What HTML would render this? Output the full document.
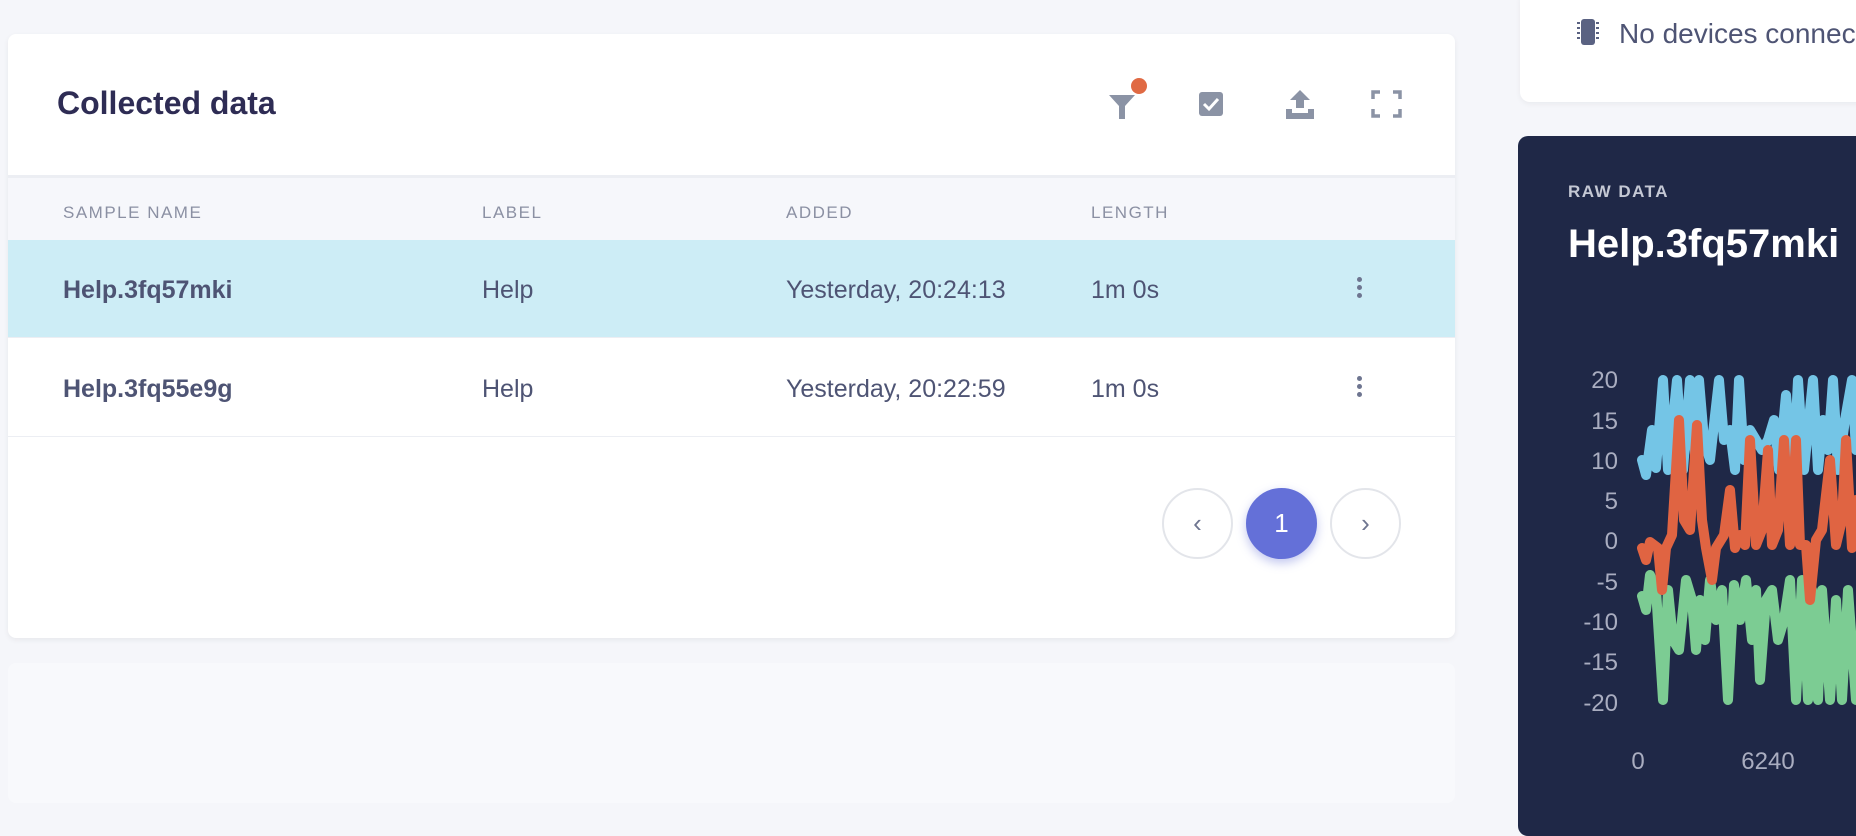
<!DOCTYPE html>
<html><head><meta charset="utf-8"><style>
*{margin:0;padding:0;box-sizing:border-box}
body{width:1856px;height:793px;overflow:hidden;background:#f5f6fa;font-family:"Liberation Sans",sans-serif;position:relative}
.card{position:absolute;left:8px;top:34px;width:1447px;height:604px;background:#fff;border-radius:8px;box-shadow:0 2px 6px rgba(0,0,0,.06);overflow:hidden}
.title{position:absolute;left:49px;top:51px;font-size:32px;font-weight:bold;color:#2e2c54}
.th{position:absolute;top:141px;left:0;width:100%;height:65px;background:#f6f7fb;border-top:3px solid #eceef3}
.th span{position:absolute;top:25px;font-size:17px;letter-spacing:1.5px;color:#8b90a3}
.row{position:absolute;left:0;width:100%;height:98px;border-bottom:1px solid #eceef3}
.row span{position:absolute;top:36px;font-size:25px;color:#4e5474}
.row b{position:absolute;top:36px;font-size:25px;color:#4e5474}
.dots{position:absolute;left:1349px;top:37px;width:6px}
.dots i{display:block;width:5px;height:5px;border-radius:50%;background:#6e7590;margin-bottom:3px}
.pg{position:absolute;top:454px;width:71px;height:71px;border-radius:50%;border:2px solid #e3e5ea;background:#fff;color:#6e7590;font-size:26px;text-align:center;line-height:66px}
.top{position:absolute;left:1520px;top:-10px;width:400px;height:112px;background:#fff;border-radius:10px;box-shadow:0 2px 6px rgba(0,0,0,.05)}
.dark{position:absolute;left:1518px;top:136px;width:400px;height:700px;background:#1f2847;border-radius:10px}
</style></head><body>
<div class="card">
<div class="title">Collected data</div>
<svg style="position:absolute;left:1100px;top:40px" width="300" height="70" viewBox="0 0 300 70">
<path d="M1 21 H27 L17 32 V45 H11 V32 Z" fill="#8b93a5"/><circle cx="31" cy="12" r="8" fill="#e06a44"/>
<rect x="91" y="18" width="24" height="24" rx="3" fill="#8b93a5"/><path d="M96 30 l5 5 l9 -10" stroke="#fff" stroke-width="3" fill="none"/>
<path d="M192 16 l-10 10 h6 v8 h8 v-8 h6 Z" fill="#8b93a5"/><path d="M178 35 h6 v4 h16 v-4 h6 v10 h-28 Z" fill="#8b93a5"/>
<path d="M265 25 v-7 h7 M285 18 h7 v7 M292 35 v7 h-7 M272 42 h-7 v-7" stroke="#8b93a5" stroke-width="3.5" fill="none"/>
</svg>
<div class="th"><span style="left:55px">SAMPLE NAME</span><span style="left:474px">LABEL</span><span style="left:778px">ADDED</span><span style="left:1083px">LENGTH</span></div>
<div class="row" style="top:206px;background:#cdedf6"><b style="left:55px">Help.3fq57mki</b><span style="left:474px">Help</span><span style="left:778px">Yesterday, 20:24:13</span><span style="left:1083px">1m 0s</span><div class="dots"><i></i><i></i><i></i></div></div>
<div class="row" style="top:305px"><b style="left:55px">Help.3fq55e9g</b><span style="left:474px">Help</span><span style="left:778px">Yesterday, 20:22:59</span><span style="left:1083px">1m 0s</span><div class="dots"><i></i><i></i><i></i></div></div>
<div class="pg" style="left:1154px">‹</div>
<div class="pg" style="left:1238px;background:#6470d8;border-color:#6470d8;color:#fff;box-shadow:0 4px 10px rgba(100,112,216,.4)">1</div>
<div class="pg" style="left:1322px">›</div>
</div>
<div style="position:absolute;left:8px;top:663px;width:1447px;height:140px;background:#f8f9fc;border-radius:8px"></div>
<div class="top"><svg style="position:absolute;left:56px;top:28px" width="30" height="30"><rect x="5" y="1" width="14" height="26" rx="3" fill="#5a6282"/><path d="M1 5h3M1 10h3M1 15h3M1 20h3M20 5h3M20 10h3M20 15h3M20 20h3" stroke="#5a6282" stroke-width="2"/></svg>
<div style="position:absolute;left:99px;top:28px;font-size:28px;color:#4e5474;white-space:nowrap">No devices connected</div></div>
<div class="dark">
<div style="position:absolute;left:50px;top:46px;font-size:17px;font-weight:bold;letter-spacing:1.5px;color:#c4c8d4">RAW DATA</div>
<div style="position:absolute;left:50px;top:86px;font-size:40px;font-weight:bold;color:#fff;white-space:nowrap">Help.3fq57mki</div>
</div>
<svg style="position:absolute;left:0;top:0" width="1856" height="793">
<g font-family="Liberation Sans" font-size="24" fill="#a9adc0" text-anchor="end">
<text x="1618" y="388">20</text><text x="1618" y="429">15</text><text x="1618" y="469">10</text><text x="1618" y="509">5</text><text x="1618" y="549">0</text><text x="1618" y="590">-5</text><text x="1618" y="630">-10</text><text x="1618" y="670">-15</text><text x="1618" y="711">-20</text>
<text x="1638" y="769" text-anchor="middle">0</text><text x="1768" y="769" text-anchor="middle">6240</text></g>
<g fill="none" stroke-width="10" stroke-linejoin="round" stroke-linecap="round">
<polyline stroke="#74c5e6" points="1642,460 1646,475 1652,430 1656,468 1663,380 1668,470 1677,380 1683,470 1690,380 1696,470 1699,380 1704,440 1710,460 1719,380 1724,440 1730,430 1735,470 1739,380 1744,460 1750,430 1756,440 1762,450 1768,440 1774,420 1779,470 1786,395 1790,440 1794,460 1798,380 1804,470 1813,380 1818,470 1823,420 1828,450 1833,380 1838,470 1845,420 1852,380 1856,450"/>
<polyline stroke="#7ccc93" points="1642,596 1646,610 1650,575 1656,590 1663,700 1668,590 1673,640 1679,650 1686,580 1692,600 1696,650 1700,600 1705,640 1710,580 1716,620 1722,590 1728,700 1734,585 1740,620 1746,580 1752,640 1756,590 1760,680 1766,600 1772,590 1778,640 1784,620 1790,580 1796,700 1802,580 1808,700 1812,590 1818,700 1822,590 1830,700 1836,600 1842,700 1848,590 1856,700"/>
<polyline stroke="#e06442" points="1642,548 1646,560 1650,542 1654,545 1658,548 1662,590 1666,548 1672,535 1679,420 1684,520 1690,530 1697,425 1702,520 1706,548 1712,580 1716,548 1724,535 1730,490 1735,548 1740,535 1745,545 1750,440 1756,545 1762,530 1768,450 1772,545 1778,530 1784,440 1790,545 1796,440 1800,545 1806,545 1810,600 1816,540 1822,530 1830,460 1836,545 1842,520 1846,440 1852,548 1856,500"/>
</g></svg>
</body></html>
